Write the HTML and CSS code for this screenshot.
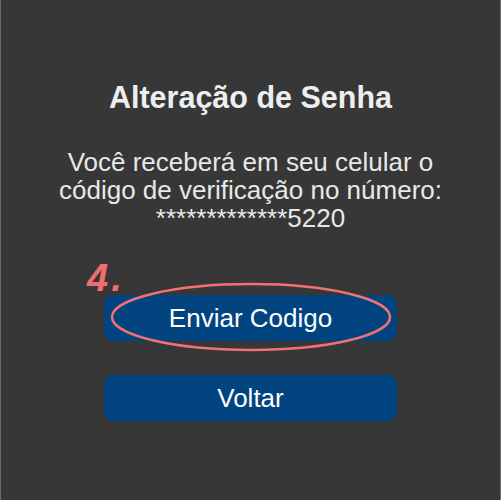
FILE: index.html
```html
<!DOCTYPE html>
<html lang="pt-BR">
<head>
<meta charset="utf-8">
<title>Alteração de Senha</title>
<link rel="stylesheet" href="styles.css">
</head>
<body>
<main class="screen">
  <h1 class="title">Alteração de Senha</h1>
  <p class="message">Você receberá em seu celular o<br>código de verificação no número:<br>*************5220</p>
  <div class="actions">
    <button class="btn" type="button">Enviar Codigo</button>
    <button class="btn" type="button">Voltar</button>
  </div>
  <span class="step-label">4.</span>
  <svg class="step-ring" width="286" height="72" viewBox="0 0 286 72" aria-hidden="true">
    <ellipse cx="143" cy="36" rx="139" ry="33" fill="none" stroke="#f07272" stroke-width="2.5"/>
  </svg>
</main>
</body>
</html>
```

FILE: styles.css
```css
html, body {
  margin: 0;
  padding: 0;
  height: 100%;
}

body {
  background: #373737;
  font-family: "Liberation Sans", Arial, sans-serif;
}

.screen {
  position: relative;
  box-sizing: border-box;
  height: 500px;
  border-left: 1px solid #6a6a6a;
  border-right: 1px solid #6a6a6a;
  padding-top: 79px;
  display: flex;
  flex-direction: column;
  align-items: center;
  color: #ececec;
}

.title {
  margin: 0;
  font-size: 30.5px;
  line-height: 36px;
  font-weight: bold;
  color: #eeeeee;
}

.message {
  margin: 33px 0 0;
  font-size: 26px;
  line-height: 28px;
  text-align: center;
  color: #e8e8e8;
}

.actions {
  margin-top: 63px;
  display: flex;
  flex-direction: column;
  gap: 34px;
}

.btn {
  width: 293px;
  height: 46px;
  border: 0;
  border-radius: 9px;
  background: #01447f;
  color: #ffffff;
  font-family: "Liberation Sans", Arial, sans-serif;
  font-size: 26px;
  line-height: 46px;
  padding: 0;
  cursor: pointer;
}

.step-label {
  position: absolute;
  left: 86px;
  top: 259px;
  font-size: 38px;
  line-height: 38px;
  font-weight: bold;
  font-style: italic;
  letter-spacing: 3px;
  color: #f26e6e;
}

.step-ring {
  position: absolute;
  left: 107px;
  top: 281px;
  pointer-events: none;
}
```
